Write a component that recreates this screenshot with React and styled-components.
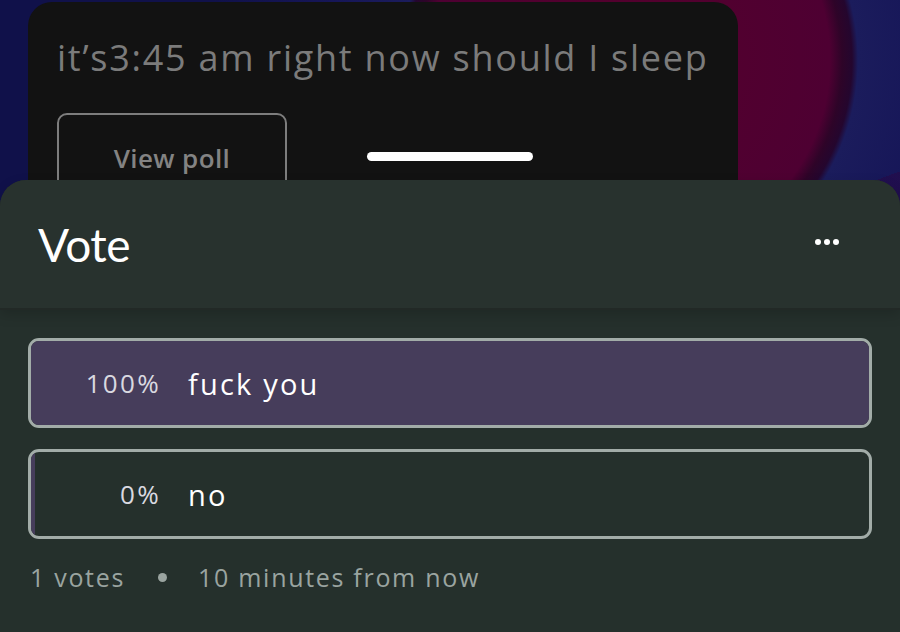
import React from 'react';
import styled, {createGlobalStyle} from 'styled-components'

const Global = createGlobalStyle`
    html, body {
        margin: 0;
        padding: 0;
        width: 900px;
        height: 632px;
        overflow: hidden;
        background: #11124a;
    }
    * { box-sizing: border-box; }
`

const options = [
    {id: 1, percent: 100, label: 'fuck you'},
    {id: 2, percent: 0, label: 'no'},
]

const App = () => {
    return (
        <Page>
            <Global />
            <PostCard>
                <Question>it’s3:45 am right now should I sleep</Question>
                <ViewPoll>View poll</ViewPoll>
            </PostCard>
            <Sheet>
                <Handle />
                <Header>
                    <Title>Vote</Title>
                    <More aria-label="more">
                        <svg width="26" height="8" viewBox="0 0 26 8">
                            <circle cx="4" cy="4" r="3" fill="#fff" />
                            <circle cx="13" cy="4" r="3" fill="#fff" />
                            <circle cx="22" cy="4" r="3" fill="#fff" />
                        </svg>
                    </More>
                </Header>
                <Body>
                    {options.map(item => (
                        <Option key={item.id}>
                            <Fill style={{width: item.percent === 0 ? '4px' : `${item.percent}%`}} />
                            <Percent>{item.percent}%</Percent>
                            <Label>{item.label}</Label>
                        </Option>
                    ))}
                    <Meta>
                        <span>1 votes</span>
                        <Dot />
                        <span>10 minutes from now</span>
                    </Meta>
                </Body>
            </Sheet>
        </Page>
    );
};

export default App;


const Page = styled.div`
    width: 900px;
    height: 632px;
    overflow: hidden;
    display: flex;
    flex-direction: column;
    font-family: "Open Sans", "Noto Sans", sans-serif;
    background:
        linear-gradient(160deg, transparent 0 52%, rgba(40, 8, 70, 0.55) 52% 100%),
        radial-gradient(circle at 630px 60px,
            #55002c 0px,
            #4e0032 200px,
            #2e0428 212px,
            #24062e 222px,
            #1b1c5c 228px,
            #161658 300px,
            #10114a 420px);
`
const PostCard = styled.div`
    margin: 2px 0 0 28px;
    width: 710px;
    height: 178px;
    overflow: hidden;
    background: #121212;
    border-radius: 24px 24px 0 0;
    padding: 34px 0 0 29px;
    display: flex;
    flex-direction: column;
    align-items: flex-start;
`
const Question = styled.div`
    font-size: 36px;
    line-height: 44px;
    color: #7b7b7b;
    letter-spacing: 1.75px;
    white-space: nowrap;
`
const ViewPoll = styled.button`
    flex-shrink: 0;
    margin-top: 33px;
    width: 230px;
    height: 90px;
    padding: 0;
    background: transparent;
    border: 2px solid #7d7d7d;
    border-radius: 10px;
    color: #838383;
    font-family: inherit;
    font-size: 26px;
    font-weight: 600;
    letter-spacing: 0.4px;
`
const Sheet = styled.div`
    position: relative;
    flex: 1;
    background: #26302c;
    border-radius: 26px 26px 0 0;
    display: flex;
    flex-direction: column;
`
const Handle = styled.div`
    position: absolute;
    top: -28px;
    left: 367px;
    width: 166px;
    height: 9px;
    border-radius: 5px;
    background: #ffffff;
`
const Header = styled.div`
    height: 128px;
    display: flex;
    align-items: center;
    justify-content: space-between;
    padding: 0 60px 0 38px;
    background: #28322e;
    border-radius: 26px 26px 0 0;
    box-shadow: 0 2px 0 #222926, 0 6px 14px rgba(0, 0, 0, 0.18);
    position: relative;
    z-index: 1;
`
const Title = styled.h2`
    margin: 0;
    font-family: "Lato", sans-serif;
    font-size: 46px;
    font-weight: 400;
    color: #ffffff;
    letter-spacing: -0.5px;
`
const More = styled.div`
    display: flex;
    align-items: center;
    margin-top: -4px;
`
const Body = styled.div`
    flex: 1;
    background: #25302c;
    padding: 30px 28px 0;
    display: flex;
    flex-direction: column;
    gap: 21px;
`
const Option = styled.div`
    position: relative;
    height: 90px;
    border: 3px solid #a2aca8;
    border-radius: 11px;
    overflow: hidden;
    display: flex;
    align-items: center;
    background: #25302c;
`
const Fill = styled.div`
    position: absolute;
    left: 0;
    top: 0;
    bottom: 0;
    background: #463d5b;
`
const Percent = styled.span`
    position: relative;
    width: 130px;
    text-align: right;
    font-size: 26px;
    color: #d9d9e0;
    letter-spacing: 2.3px;
`
const Label = styled.span`
    position: relative;
    margin-left: 27px;
    font-size: 29px;
    color: #ffffff;
    letter-spacing: 2.2px;
`
const Meta = styled.div`
    display: flex;
    align-items: center;
    margin: 0 0 0 2px;
    font-size: 25px;
    color: #9aa4a0;
    letter-spacing: 1.7px;
`
const Dot = styled.span`
    width: 9px;
    height: 9px;
    border-radius: 50%;
    background: #9aa4a0;
    margin: 0 31px 0 33px;
`
